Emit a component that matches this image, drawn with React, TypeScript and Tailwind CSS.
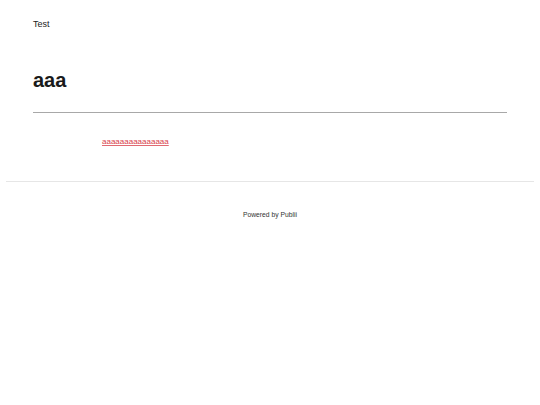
const FONT = "font-['Liberation_Sans',Arial,sans-serif]";

const Header = () => (
  <header className="px-[33px] pt-[20px]">
    <p className="text-[9px] leading-[9px] text-[#222]">Test</p>
  </header>
);

const Article = () => (
  <main className="px-[33px]">
    <h1 className="mt-[41px] text-[20px] leading-[20px] font-bold text-[#1a1a1a]">aaa</h1>
    <hr className="mt-[22px] border-0 border-t border-[#a8a8a8]" />
    <div className="mt-[25px] pl-[69px] text-[8px] leading-[8px]">
      <a href="#" className="text-[#d9404a] underline decoration-[#e06a72]">
        aaaaaaaaaaaaaaa
      </a>
    </div>
  </main>
);

const Footer = () => (
  <footer className="mx-[6px] mt-[35px] border-t border-[#e6e6e6] pt-[29px] text-center">
    <p className="text-[6.75px] leading-[7px] text-[#333]">
      Powered by Publii
    </p>
  </footer>
);

export default function App() {
  return (
    <div className={`${FONT} min-h-[405px] w-[540px] bg-white`}>
      <Header />
      <Article />
      <Footer />
    </div>
  );
}
